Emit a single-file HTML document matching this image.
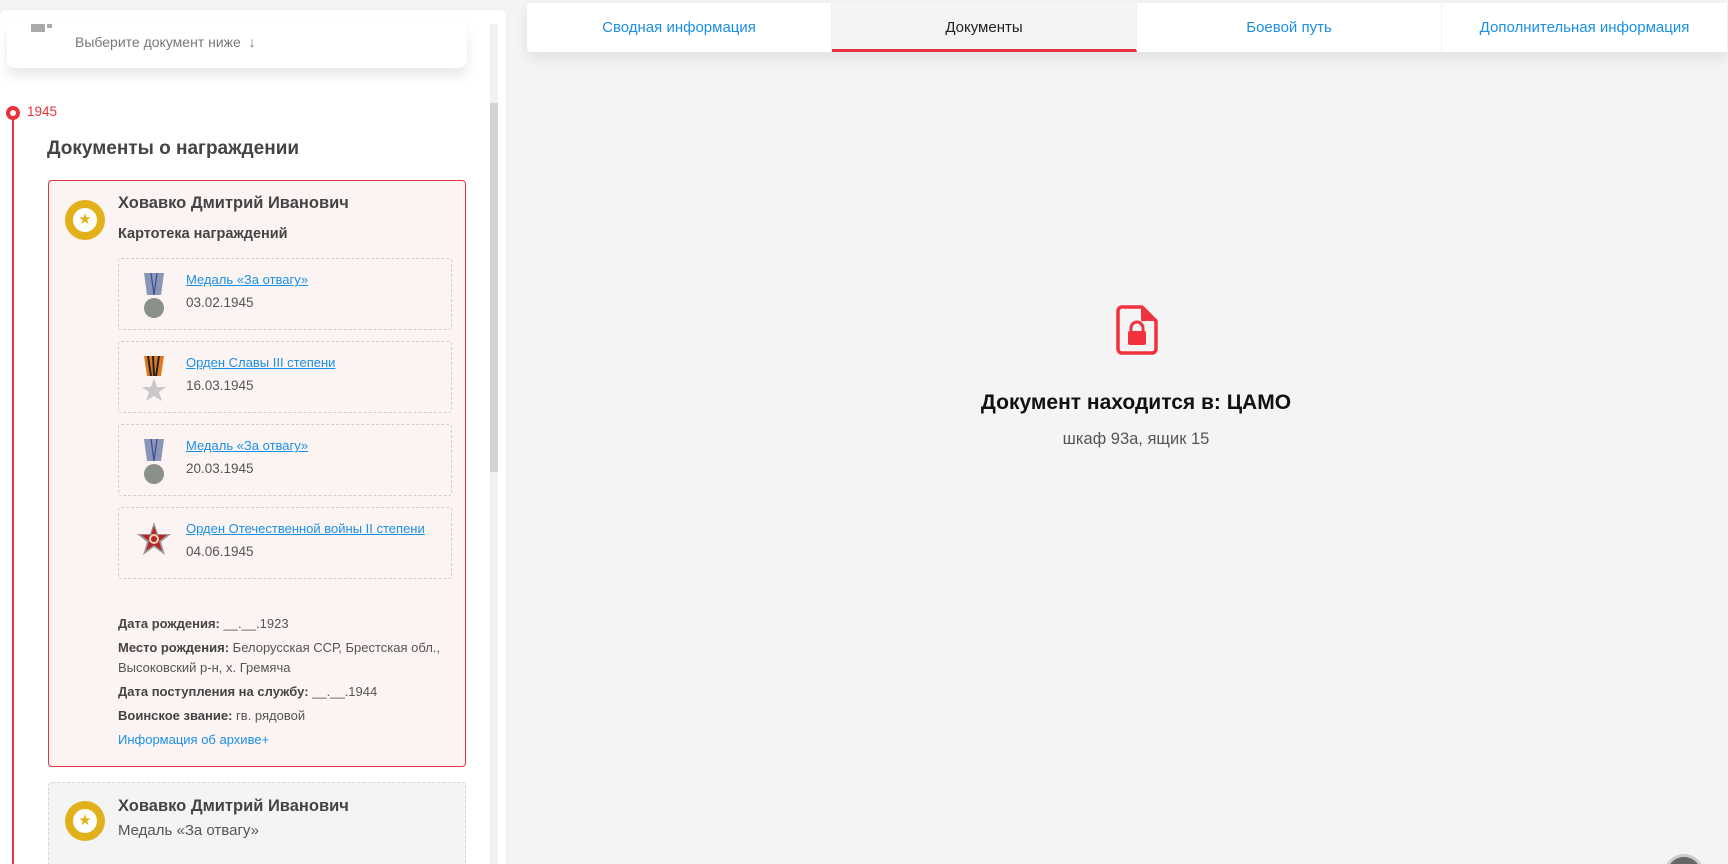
<!DOCTYPE html>
<html style="width:1728px;height:864px;overflow:hidden"><head><meta charset="utf-8"><style>
*{box-sizing:border-box;margin:0;padding:0}
body{width:1728px;height:864px;overflow:hidden;background:#f4f4f4;font-family:"Liberation Sans",sans-serif;position:relative;color:#444}
.abs{position:absolute}
.left{left:0;top:10px;width:506px;height:854px;background:#fff;border-radius:6px 6px 0 0;box-shadow:0 0 3px rgba(0,0,0,.06)}
.topcard{left:7px;top:24px;width:460px;height:44px;background:#fff;border-radius:0 0 8px 8px;box-shadow:0 8px 12px rgba(0,0,0,.09)}
.sb{left:490px;top:24px;width:8px;height:840px;background:#f1f1f1}
.thumb{left:490px;top:103px;width:8px;height:369px;background:#d2d2d2}
.line{left:12px;top:113px;width:2px;height:751px;background:#e8333e}
.dot{left:6px;top:106px;width:14px;height:14px;border-radius:50%;background:#e8333e}
.dot:after{content:"";position:absolute;left:4px;top:4px;width:6px;height:6px;border-radius:50%;background:#fff}
.red{left:48px;top:180px;width:418px;height:587px;background:#fcf4f3;border:1px solid #e8333e;border-radius:4px}
.gray{left:48px;top:782px;width:418px;height:82px;background:#f4f4f4;border:1px dashed #d8d8d8;border-bottom:none;border-radius:4px 4px 0 0}
.medal{width:40px;height:40px;border-radius:50%;background:#e1b01a}
.medal:after{content:"★";position:absolute;left:8px;top:8px;width:24px;height:24px;border-radius:50%;background:#fff;color:#e1b01a;font-size:15px;line-height:24px;text-align:center}
.box{left:118px;width:334px;height:72px;border:1px dashed #cfcfcf;border-radius:3px}
.link{color:#1a8fe6;text-decoration:underline;font-size:13px;position:absolute;left:67px;top:13px;white-space:nowrap}
.date{color:#555;font-size:13.5px;position:absolute;left:67px;top:36px}
.det{left:118px;font-size:13px;color:#555;white-space:nowrap}
.det b{color:#444}
.tabs{left:527px;top:3px;width:1201px;height:49px;background:#fff;border-radius:4px 0 0 4px;box-shadow:0 6px 14px rgba(0,0,0,.08);display:flex}
.tab{width:305px;height:49px;line-height:50px;text-align:center;color:#1a8fe6;font-size:15px;border-right:1px solid #f2f2f2}
.tab.act{background:#f4f4f4;color:#222;border-bottom:3px solid #e8333e;line-height:50px}
</style></head><body>
<div class="abs left"></div>
<div class="abs topcard"><div class="abs" style="left:24px;top:0;width:14px;height:8px;background:#aaa"></div><div class="abs" style="left:40px;top:0;width:5px;height:4px;background:#aaa"></div><div class="abs" style="left:68px;top:10px;font-size:14px;color:#777">Выберите документ ниже &nbsp;↓</div></div>
<div class="abs sb"></div><div class="abs thumb"></div>
<div class="abs line"></div><div class="abs dot"></div>
<div class="abs" style="left:27px;top:104px;color:#e8333e;font-size:13.5px">1945</div>
<div class="abs" style="left:47px;top:138px;font-size:19px;font-weight:bold;color:#444">Документы о награждении</div>
<div class="abs red"></div>
<div class="abs medal" style="left:65px;top:200px"></div>
<div class="abs" style="left:118px;top:194px;font-size:16.5px;font-weight:bold">Ховавко Дмитрий Иванович</div>
<div class="abs" style="left:118px;top:226px;font-size:14.5px;font-weight:bold">Картотека награждений</div>

<div class="abs box" style="top:258px">
<svg class="abs" style="left:22px;top:14px" width="26" height="46"><path d="M3 0h20l-3 22h-14z" fill="#8a96b8"/><path d="M10 0l3 22M16 0l-3 22" stroke="#3b4c8a" stroke-width="1.2"/><circle cx="13" cy="35" r="10" fill="#8a918a"/></svg>
<a class="link">Медаль «За отвагу»</a><div class="date">03.02.1945</div></div>
<div class="abs box" style="top:341px">
<svg class="abs" style="left:22px;top:14px" width="26" height="46"><path d="M3 0h20l-3 20h-14z" fill="#e07820"/><path d="M7 0l3 20M12 0l1 20M18 0l-3 20" stroke="#222" stroke-width="2"/><polygon points="13,22 16,31 25,31 18,36 21,45 13,40 5,45 8,36 1,31 10,31" fill="#c8c8c8"/></svg>
<a class="link">Орден Славы III степени</a><div class="date">16.03.1945</div></div>
<div class="abs box" style="top:424px">
<svg class="abs" style="left:22px;top:14px" width="26" height="46"><path d="M3 0h20l-3 22h-14z" fill="#8a96b8"/><path d="M10 0l3 22M16 0l-3 22" stroke="#3b4c8a" stroke-width="1.2"/><circle cx="13" cy="35" r="10" fill="#8a918a"/></svg>
<a class="link">Медаль «За отвагу»</a><div class="date">20.03.1945</div></div>
<div class="abs box" style="top:507px">
<svg class="abs" style="left:17px;top:14px" width="36" height="40"><polygon points="18,0 22,12 35,12 25,20 29,33 18,25 7,33 11,20 1,12 14,12" fill="#999"/><polygon points="18,4 21,13 31,13 23,19 26,29 18,23 10,29 13,19 5,13 15,13" fill="#b5252a"/><circle cx="18" cy="17" r="5" fill="#e8d8b0"/><circle cx="18" cy="17" r="3" fill="#b5252a"/></svg>
<a class="link">Орден Отечественной войны II степени</a><div class="date">04.06.1945</div></div>

<div class="abs det" style="top:616px"><b>Дата рождения:</b> __.__.1923</div>
<div class="abs det" style="top:640px"><b>Место рождения:</b> Белорусская ССР, Брестская обл.,</div>
<div class="abs det" style="top:660px">Высоковский р-н, х. Гремяча</div>
<div class="abs det" style="top:684px"><b>Дата поступления на службу:</b> __.__.1944</div>
<div class="abs det" style="top:708px"><b>Воинское звание:</b> гв. рядовой</div>
<div class="abs det" style="top:732px;color:#1a8fe6">Информация об архиве+</div>

<div class="abs gray"></div>
<div class="abs medal" style="left:65px;top:801px"></div>
<div class="abs" style="left:118px;top:797px;font-size:16.5px;font-weight:bold">Ховавко Дмитрий Иванович</div>
<div class="abs" style="left:118px;top:822px;font-size:15px;color:#555">Медаль «За отвагу»</div>

<div class="abs tabs"><div class="tab">Сводная информация</div><div class="tab act">Документы</div><div class="tab">Боевой путь</div><div class="tab" style="width:286px">Дополнительная информация</div></div>

<svg class="abs" style="left:1116px;top:305px" width="42" height="50" viewBox="0 0 42 50"><path d="M6 2h20l14 14v28a4 4 0 0 1-4 4H6a4 4 0 0 1-4-4V6a4 4 0 0 1 4-4z" fill="none" stroke="#f0323f" stroke-width="3.5"/><path d="M25 1v15h15z" fill="#f0323f"/><rect x="12" y="26" width="18" height="14" rx="2" fill="#f0323f"/><path d="M15 27v-4a6 6 0 0 1 12 0v4" fill="none" stroke="#f0323f" stroke-width="3"/></svg>
<div class="abs" style="left:880px;top:391px;width:512px;text-align:center;font-size:21px;font-weight:bold;color:#111">Документ находится в: ЦАМО</div>
<div class="abs" style="left:880px;top:430px;width:512px;text-align:center;font-size:16.5px;color:#555">шкаф 93а, ящик 15</div>
<div class="abs" style="left:1664px;top:854px;width:40px;height:10px;overflow:hidden"><div style="width:40px;height:40px;border-radius:50%;background:#666;border:3px solid #ccc"></div></div>
</body></html>
